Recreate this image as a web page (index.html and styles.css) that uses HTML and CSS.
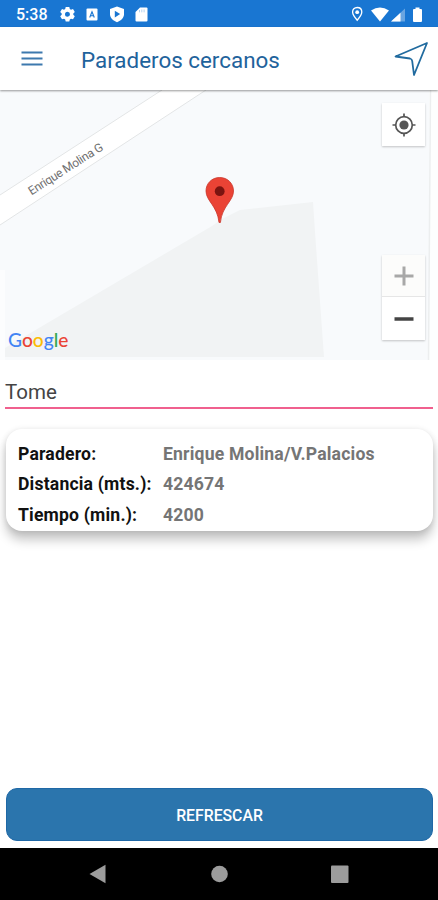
FILE: index.html
```html
<!DOCTYPE html>
<html lang="es">
<head>
    <meta charset="UTF-8">
    <meta name="viewport" content="width=device-width, initial-scale=1.0">
    <title>Paraderos cercanos</title>
    <link rel="stylesheet" href="styles.css">
</head>
<body>

<div class="status-bar">
    <span class="clock">5:38</span>
    <svg class="status-left" width="90" height="18" viewBox="0 0 90 18" fill="#fff">
        <!-- Settings -->
        <path fill-rule="evenodd" d="M5.7 2h3.6l.5 2 1.2.7 2-.6 1.8 3-1.5 1.5v1.2l1.5 1.5-1.8 3-2-.6-1.2.7-.5 2H5.7l-.5-2-1.2-.7-2 .6-1.8-3 1.5-1.5V8.6L.2 7.1l1.8-3 2 .6L5.2 4zM7.5 6.7a2.5 2.5 0 1 0 0 5 2.5 2.5 0 0 0 0-5z"/>
        <!-- Keyboard -->
        <rect x="26.5" y="3.5" width="11" height="12" rx="1"/>
        <path d="M29.7 12.5 32 6.7l2.3 5.8M30.5 10.8h3" fill="none" stroke="#1976d2" stroke-width="1.1"/>
        <!-- Play Protect -->
        <path d="M57 1.5l7 2.5v5.2c0 3.6-3 6.2-7 8-4-1.8-7-4.4-7-8V4z"/>
        <path d="M54.8 5.8v6.6l5.4-3.3z" fill="#1976d2"/>
        <!-- SD card -->
        <path d="M80 2.5h6.5q1 0 1 1v12q0 1-1 1h-10q-1 0-1-1V7z"/>
        <path d="M79.5 5v2.3M81.8 4.5v2.8M84.1 4.5v2.8" stroke="#1976d2" stroke-width=".8" opacity=".4"/>
    </svg>
    <svg class="status-right" width="74" height="18" viewBox="0 0 74 18" fill="#fff">
        <path d="M5.2 2.5c2.8 0 4.6 2 4.6 4.6 0 3-4.6 8.1-4.6 8.1S.6 10.1.6 7.1C.6 4.5 2.4 2.5 5.2 2.5z" fill="none" stroke="#fff" stroke-width="1.3"/>
        <circle cx="5.2" cy="7.2" r="1.9"/>
        <path d="M19 5.5q9-6 18 0l-9 11z"/>
        <path d="M39 16.5 53 3.5v13z" opacity=".35"/>
        <path d="M39 16.5 48.5 7.7v8.8z"/>
        <path d="M63.5 2.5h4v1.5H69q1 0 1 1v11q0 1-1 1h-7q-1 0-1-1V5q0-1 1-1h1.500z"/>
    </svg>
</div>

<header class="toolbar">
    <svg class="menu-icon" width="22" height="16" viewBox="0 0 22 16">
        <path d="M.5 1.500h21M.5 7.500h21M.5 13.500h21" stroke="#3d79ae" stroke-width="2.200"/>
    </svg>
    <h1 class="title">Paraderos cercanos</h1>
    <svg class="send-icon" width="36" height="36" viewBox="0 0 36 36">
        <path d="M34 2 2.500 15.500 17 17.500q2 .5 2.200 2.500L21 34z" fill="none" stroke="#216b9f" stroke-width="1.800" stroke-linejoin="round"/>
    </svg>
</header>

<main class="content">
    <div class="map">
        <svg class="map-canvas" width="438" height="270" viewBox="0 0 438 270">
            <rect width="430" height="270" fill="#f8fafc"/>
            <rect x="429" width="9" height="270" fill="#fdfefe"/>
            <rect y="180" width="5" height="90" fill="#fcfdfe"/>
            <path d="M430.5 0 428.5 270" stroke="#eceeef" stroke-width="1.5"/>
            <!-- Street -->
            <path d="M0 105 162 0h44L0 135z" fill="#fff"/>
            <path d="M0 105 162 0M206 0 0 135" stroke="#e3e5e6" stroke-width="1"/>
            <text class="street-name" transform="translate(31.5 105.5) rotate(-32.5)" textLength="86">Enrique Molina G</text>
            <!-- Block -->
            <path d="M5 258 212 136 222 129 240 120 313 112 315 142 324 267H5z" fill="#f1f3f4"/>
            <!-- Marker -->
            <path d="M219.7 87.5c8 0 13.8 6 13.8 13.5 0 10-11.5 15-13.1 31.5h-1.4C217.5 116 206 111 206 101c0-7.5 5.8-13.5 13.7-13.5z" fill="#ea4335" stroke="#c9352a" stroke-width=".8"/>
            <circle cx="219.7" cy="101.2" r="4.9" fill="#7a1410"/>
            <text class="google" x="8" y="256.500" textLength="60.500" lengthAdjust="spacingAndGlyphs"><tspan fill="#4285f4">G</tspan><tspan fill="#ea4335">o</tspan><tspan fill="#fbbc05">o</tspan><tspan fill="#4285f4">g</tspan><tspan fill="#34a853">l</tspan><tspan fill="#ea4335">e</tspan></text>
        </svg>
        <div class="map-controls">
            <button class="map-button">
                <svg width="24" height="24" viewBox="0 0 24 24" fill="none" stroke="#555" stroke-width="1.7">
                    <circle cx="12" cy="12" r="8.3"/>
                    <circle cx="12" cy="12" r="4.6" fill="#555" stroke="none"/>
                    <path d="M12 .5v3.500M12 20v3.500M.5 12H4M20 12h3.500"/>
                </svg>
            </button>
            <div class="zoom-controls">
                <button class="map-button zoom-in">
                    <svg width="20" height="20" viewBox="0 0 20 20"><path d="M10 .5v19M.5 10h19" stroke="#a8a8a8" stroke-width="3"/></svg>
                </button>
                <button class="map-button">
                    <svg width="20" height="20" viewBox="0 0 20 20"><path d="M.5 10h19" stroke="#444" stroke-width="3.500"/></svg>
                </button>
            </div>
        </div>
    </div>

    <div class="city">Tome</div>

    <dl class="card">
        <dt>Paradero:</dt>
        <dd>Enrique Molina/V.Palacios</dd>
        <dt>Distancia (mts.):</dt>
        <dd>424674</dd>
        <dt>Tiempo (min.):</dt>
        <dd>4200</dd>
    </dl>

    <button class="refresh">REFRESCAR</button>
</main>

<nav class="nav-bar">
    <svg width="438" height="52" viewBox="0 0 438 52" fill="#9c9c9c">
        <path d="M89.5 26 105.500 16.800v18.400z"/>
        <circle cx="219.5" cy="26" r="8.3"/>
        <rect x="331" y="17.5" width="17.5" height="17.5" rx="1"/>
    </svg>
</nav>

</body>
</html>
```
FILE: styles.css
```css
* {
    box-sizing: border-box;
}
body {
    font-family: Roboto, "Liberation Sans", sans-serif;
    margin: 0;
    height: 900px;
    display: flex;
    flex-direction: column;
    background-color: #fff;
    overflow: hidden;
}
svg {
    display: block;
}
button {
    font-family: inherit;
    border: none;
    padding: 0;
}
.status-bar {
    height: 27px;
    flex: none;
    display: flex;
    align-items: center;
    padding: 0 12px 0 16px;
    background-color: #1976d2;
    color: #fff;
}
.clock {
    width: 44px;
    font-size: 16px;
    font-weight: 500;
    line-height: 28px;
    padding-top: 2px;
}
.status-right {
    margin-left: auto;
}
.toolbar {
    height: 63px;
    flex: none;
    display: flex;
    align-items: center;
    padding: 0 9px 0 21px;
    background-color: #fff;
    box-shadow: 0 1px 2px rgba(0, 0, 0, 0.4);
    z-index: 1;
}
.title {
    margin: 2px 0 0 38px;
    font-size: 22.4px;
    font-weight: 400;
    color: #1f639c;
}
.send-icon {
    margin-left: auto;
}
.content {
    flex: 1;
    display: flex;
    flex-direction: column;
}
.map {
    display: grid;
    height: 270px;
}
.map-canvas,
.map-controls {
    grid-area: 1 / 1;
}
.street-name {
    font-size: 12px;
    fill: #707070;
}
.google {
    font-family: Lato, sans-serif;
    font-size: 20px;
    font-weight: 500;
}
.map-controls {
    display: flex;
    flex-direction: column;
    justify-content: space-between;
    justify-self: end;
    padding: 13px 13px 20px 0;
}
.map-button {
    width: 43px;
    height: 43px;
    display: flex;
    align-items: center;
    justify-content: center;
    background-color: #fff;
    box-shadow: 0 1px 2px rgba(0, 0, 0, 0.22);
}
.zoom-controls {
    box-shadow: 0 1px 2px rgba(0, 0, 0, 0.22);
}
.zoom-controls .map-button {
    box-shadow: none;
}
.zoom-controls .zoom-in {
    height: 42px;
    background-color: #fcfcfb;
    border-bottom: 1px solid #e6e6e6;
}
.city {
    margin: 12px 5px 0;
    height: 37px;
    border-bottom: 2px solid #f0608e;
    font-size: 20.5px;
    line-height: 41px;
    color: #444;
}
.card {
    display: grid;
    grid-template-columns: 145px 1fr;
    grid-auto-rows: 30.5px;
    align-items: center;
    height: 102px;
    margin: 20px 5px 0 6px;
    padding: 9.5px 12px 0;
    border-radius: 16px;
    background-color: #fff;
    box-shadow: 0 9px 11px rgba(0, 0, 0, 0.22), 0 1px 6px rgba(0, 0, 0, 0.12);
    font-size: 17.6px;
    font-weight: 700;
    letter-spacing: 0.18px;
}
.card dt {
    color: #111;
}
.card dd {
    margin: 0;
    color: #757575;
}
.refresh {
    height: 53px;
    margin: auto 5px 7px 6px;
    padding-top: 2px;
    border-radius: 11px;
    border: 1px solid #1f68a6;
    background-color: #2b75ad;
    color: #fff;
    font-size: 15.8px;
    font-weight: 500;
}
.nav-bar {
    height: 52px;
    flex: none;
    background-color: #000;
}
```
